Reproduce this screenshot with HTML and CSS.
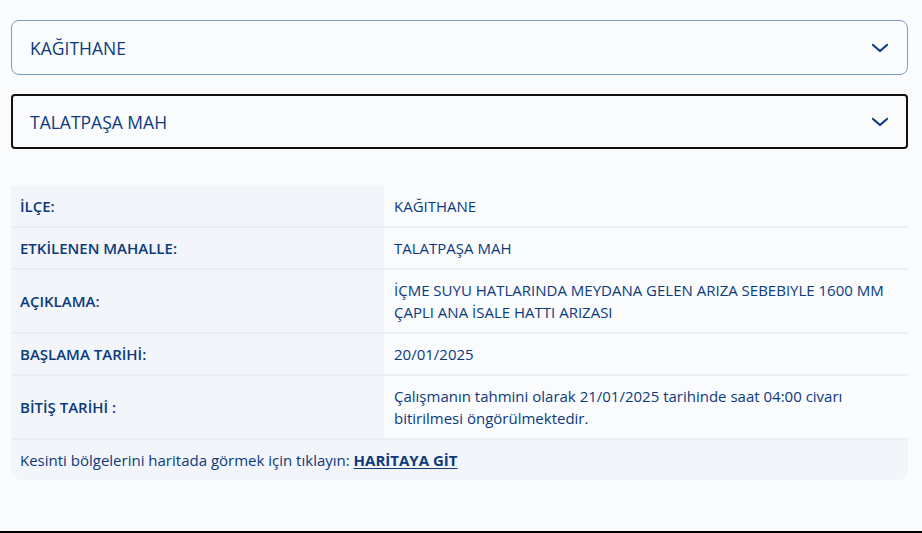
FILE: index.html
```html
<!DOCTYPE html>
<html lang="tr">
<head>
<meta charset="utf-8">
<link rel="stylesheet" href="styles.css">
</head>
<body>
<div class="page">
  <div class="select select-idle">
    <span class="select-text">KAĞITHANE</span>
    <svg class="chev" width="18" height="10" viewBox="0 0 18 10"><path d="M2 2 L9 8 L16 2" fill="none" stroke="#0d3c80" stroke-width="2.2" stroke-linecap="round" stroke-linejoin="round"/></svg>
  </div>
  <div class="select select-focus">
    <span class="select-text">TALATPAŞA MAH</span>
    <svg class="chev" width="18" height="10" viewBox="0 0 18 10"><path d="M2 2 L9 8 L16 2" fill="none" stroke="#0d3c80" stroke-width="2.2" stroke-linecap="round" stroke-linejoin="round"/></svg>
  </div>
  <table class="info">
    <colgroup><col class="c-label"><col class="c-value"></colgroup>
    <tr class="r-short"><th>İLÇE:</th><td>KAĞITHANE</td></tr>
    <tr class="r-short"><th>ETKİLENEN MAHALLE:</th><td>TALATPAŞA MAH</td></tr>
    <tr class="r-tall"><th>AÇIKLAMA:</th><td>İÇME SUYU HATLARINDA MEYDANA GELEN ARIZA SEBEBIYLE 1600 MM ÇAPLI ANA İSALE HATTI ARIZASI</td></tr>
    <tr class="r-short"><th>BAŞLAMA TARİHİ:</th><td>20/01/2025</td></tr>
    <tr class="r-tall"><th>BİTİŞ TARİHİ :</th><td>Çalışmanın tahmini olarak 21/01/2025 tarihinde saat 04:00 civarı bitirilmesi öngörülmektedir.</td></tr>
    <tr class="r-foot"><td colspan="2" class="foot">Kesinti bölgelerini haritada görmek için tıklayın: <a href="#" class="maplink">HARİTAYA GİT</a></td></tr>
  </table>
</div>
</body>
</html>
```
FILE: styles.css
```css
html, body {
  margin: 0;
  padding: 0;
  background: #f8fafc;
}
body {
  font-family: "Open Sans", "Noto Sans", sans-serif;
  color: #0c3a7c;
}
.page {
  box-sizing: border-box;
  height: 533px;
  padding: 20px 14px 0 11px;
  border-bottom: 2px solid #000;
  background: #f9fbfd;
  display: flex;
  flex-direction: column;
}
.select {
  box-sizing: border-box;
  height: 55px;
  display: flex;
  align-items: center;
  justify-content: space-between;
  padding: 0 18px 0 18px;
  background: #f9fbfd;
}
.select-idle {
  border: 1px solid #7d9bc5;
  border-radius: 8px;
}
.select-focus {
  margin-top: 19px;
  border: 2px solid #111;
  border-radius: 4px;
  padding-left: 17px;
  padding-right: 17px;
}
.select-text {
  font-size: 17.5px;
  font-weight: 500;
}
.chev {
  display: block;
}
.info {
  margin-top: 37px;
  width: 100%;
  table-layout: fixed;
  border-collapse: collapse;
  font-size: 15px;
  line-height: 22px;
}
.c-label { width: 373px; }
.info th {
  text-align: left;
  font-weight: 600;
  background: #f2f5fa;
  padding: 0 9px;
  border-bottom: 2px solid #eaeef4;
}
.info td {
  background: #f9fbfd;
  padding: 0 10px;
  border-bottom: 2px solid #eaeef4;
}
.r-short th, .r-short td { height: 40px; }
.r-tall th, .r-tall td { height: 62px; }
.info .foot {
  background: #f2f5fa;
  height: 40px;
  padding: 0 9px;
  border-bottom: none;
  border-radius: 0 0 10px 10px;
}
.maplink {
  color: #0c3a7c;
  font-weight: 700;
  text-decoration: underline;
  text-underline-offset: 2px;
}
```
